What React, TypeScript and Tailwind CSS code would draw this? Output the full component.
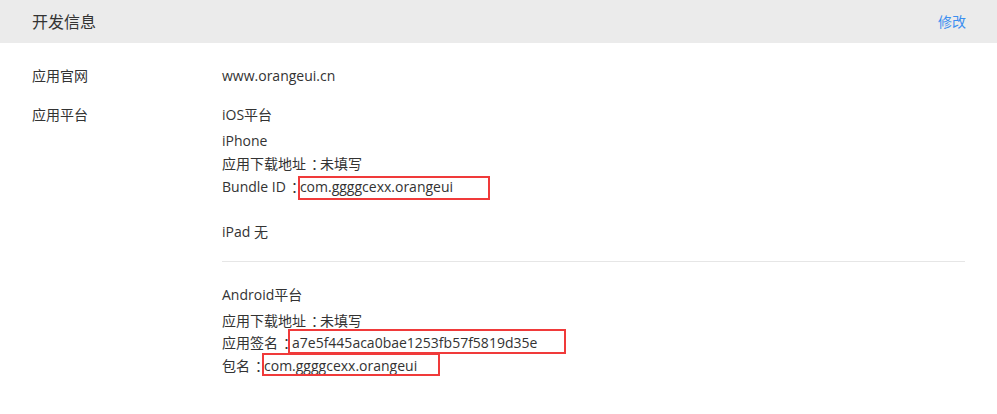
function Colon() {
  // full-width colon, centred in its cell like the reference font draws it
  return <span className="inline-block pl-[5px] tracking-[-5px]">：</span>;
}

function Marked({ text, box }: { text: string; box: string }) {
  return (
    <span className="relative inline-block">
      {text}
      <span className={`absolute border-2 border-[#f03a3a] ${box}`} />
    </span>
  );
}

export default function App() {
  const font = { fontFamily: '"Open Sans", "Noto Sans CJK SC", sans-serif' };

  return (
    <div lang="zh-CN" className="w-[997px] h-[414px] bg-white text-[#333] text-[14px]" style={font}>
      <div className="h-[43px] bg-[#ebebeb] flex items-center justify-between pl-[32px] pr-[31px]">
        <span className="text-[16px]">开发信息</span>
        <button className="text-[14px] text-[#3c8ff0]">修改</button>
      </div>

      <div className="px-[32px] pt-[21px] leading-[23px]">
        <div className="flex">
          <div className="w-[190px]">应用官网</div>
          <div>www.orangeui.cn</div>
        </div>

        <div className="flex mt-[16px]">
          <div className="w-[190px]">应用平台</div>
          <div className="flex-1">
            <div>iOS平台</div>
            <div className="mt-[3px]">iPhone</div>
            <div>
              应用下载地址<Colon />未填写
            </div>
            <div>
              Bundle ID<Colon />
              <Marked text="com.ggggcexx.orangeui" box="-left-[2px] top-[1px] w-[192px] h-[24px]" />
            </div>
            <div className="mt-[22px]">iPad 无</div>

            <div className="h-px bg-[#e6e6e6] mt-[18px]" />

            <div className="mt-[21px]">Android平台</div>
            <div className="mt-[3px]">
              应用下载地址<Colon />未填写
            </div>
            <div className="leading-[22px]">
              应用签名<Colon />
              <Marked text="a7e5f445aca0bae1253fb57f5819d35e" box="-left-[4px] -top-[3px] w-[278px] h-[25px]" />
            </div>
            <div>
              包名<Colon />
              <Marked text="com.ggggcexx.orangeui" box="-left-[2px] -top-[1px] w-[178px] h-[23px]" />
            </div>
          </div>
        </div>
      </div>
    </div>
  );
}
